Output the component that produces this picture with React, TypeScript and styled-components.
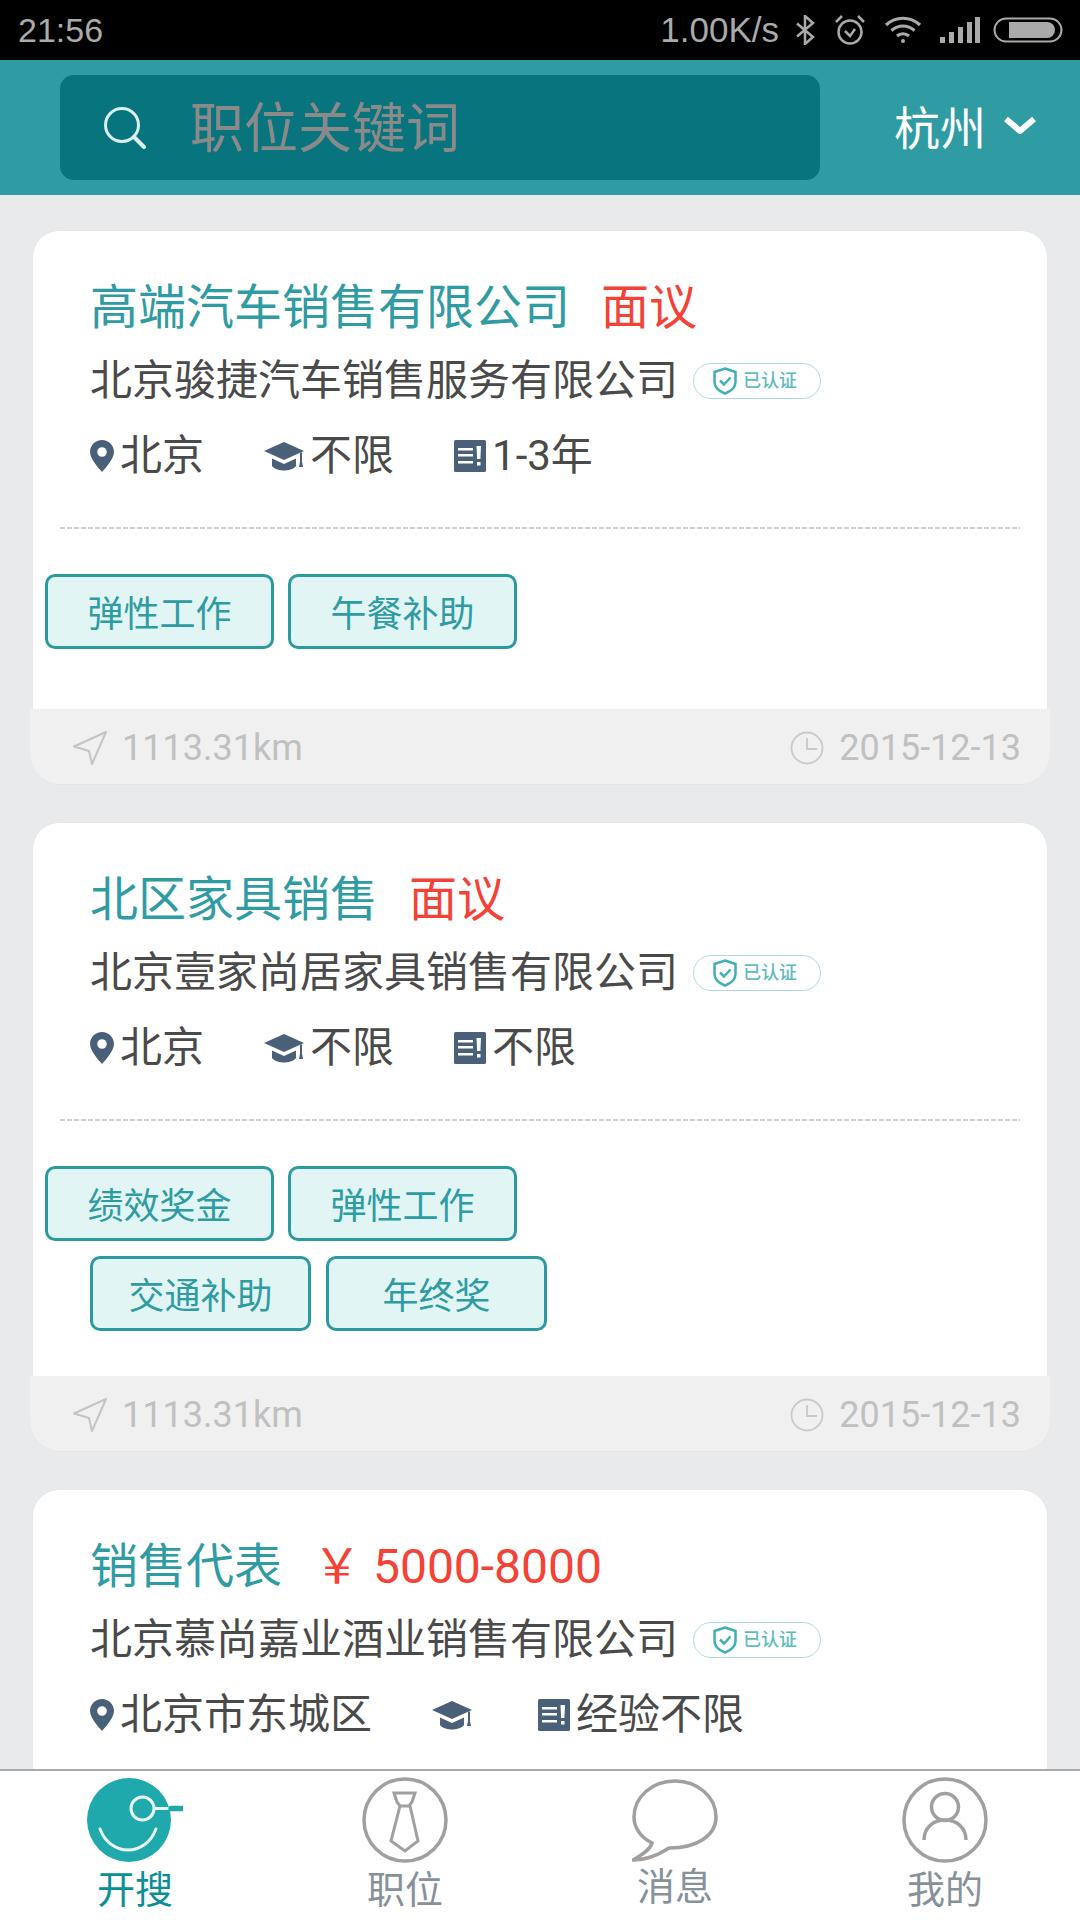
import styled, { createGlobalStyle } from 'styled-components';

const GlobalStyle = createGlobalStyle`
  html, body {
    margin: 0;
    padding: 0;
    background: #e9eaec;
    font-family: Roboto, "Noto Sans CJK SC", sans-serif;
  }
  * { box-sizing: border-box; }
`;

interface Job {
  title: string;
  salary: string;
  company: string;
  city: string;
  education: string;
  experience: string;
  tagRows: string[][];
}

const jobs: Job[] = [
  {
    title: '高端汽车销售有限公司',
    salary: '面议',
    company: '北京骏捷汽车销售服务有限公司',
    city: '北京',
    education: '不限',
    experience: '1-3年',
    tagRows: [['弹性工作', '午餐补助']],
  },
  {
    title: '北区家具销售',
    salary: '面议',
    company: '北京壹家尚居家具销售有限公司',
    city: '北京',
    education: '不限',
    experience: '不限',
    tagRows: [['绩效奖金', '弹性工作'], ['交通补助', '年终奖']],
  },
  {
    title: '销售代表',
    salary: '￥ 5000-8000',
    company: '北京慕尚嘉业酒业销售有限公司',
    city: '北京市东城区',
    education: '',
    experience: '经验不限',
    tagRows: [],
  },
];

const PinIcon = () => (
  <svg width="24" height="32" viewBox="0 0 24 32">
    <path
      fill="#4a6078"
      fillRule="evenodd"
      d="M12 0C5.4 0 0 5.2 0 11.8 0 19 8 27.5 12 32c4-4.5 12-13 12-20.2C24 5.2 18.6 0 12 0Zm0 7.2a4.8 4.8 0 1 1 0 9.6 4.8 4.8 0 0 1 0-9.6Z"
    />
  </svg>
);

const CapIcon = () => (
  <svg width="40" height="30" viewBox="0 0 40 30">
    <path fill="#4a6078" d="M20 1 40 10 20 19 0 10Z" />
    <path fill="#4a6078" d="M8 17.5 20 23l12-5.5V25c-3 3.5-8 4.500-12 4.500s-9-1-12-4.500Z" />
    <path fill="#4a6078" d="M36 11.500h2V21l1 5h-4l1-5Z" />
  </svg>
);

const NewsIcon = () => (
  <svg width="32" height="32" viewBox="0 0 32 32">
    <rect width="32" height="32" rx="1.500" fill="#4a6078" />
    <path fill="#fff" d="M4 8h15v2.500H4zM4 14h15v2.500H4zM4 21h15v2.500H4z" />
    <path fill="#fff" d="M22.500 6H27l-.6 13h-3.300zM23 22h3.500v3.500H23z" />
  </svg>
);

const SendIcon = () => (
  <svg width="34" height="34" viewBox="0 0 34 34" fill="none" stroke="#c4c4c4" strokeWidth="2" strokeLinejoin="round">
    <path d="M33 1 1 15.500l15 4.500 3 13Z" />
  </svg>
);

const ClockIcon = () => (
  <svg width="34" height="34" viewBox="0 0 34 34" fill="none" stroke="#c9c9c9" strokeWidth="1.800">
    <circle cx="17" cy="17" r="15.500" />
    <path d="M17 7v11h10" />
  </svg>
);

const ShieldIcon = () => (
  <svg width="24" height="28" viewBox="0 0 24 28" fill="none" stroke="#3fb0b5" strokeWidth="2.500">
    <path d="M12 1.500 22.500 5v10c0 6-5 9.500-10.500 11.500C6.500 24.500 1.500 21 1.500 15V5Z" />
    <path d="m7 13.500 4 4 6.500-7" />
  </svg>
);

const LogoIcon = () => (
  <svg width="96" height="86" viewBox="0 0 96 86" fill="none">
    <circle cx="42" cy="43" r="42" fill="#1fa9ad" />
    <circle cx="55.500" cy="31.500" r="11.500" stroke="#eafafa" strokeWidth="3" />
    <path d="M67 31.500h17" stroke="#eafafa" strokeWidth="3" />
    <path d="M84 31.500h11" stroke="#1fa9ad" strokeWidth="5.500" strokeLinecap="round" />
    <path d="M13 52c5 14 17 21 28 21s23-7 28-21" stroke="#eafafa" strokeWidth="3" strokeLinecap="round" />
  </svg>
);

const TieIcon = () => (
  <svg width="86" height="86" viewBox="0 0 86 86" fill="none" stroke="#a0a0a0" strokeWidth="3.500">
    <circle cx="43" cy="43" r="41" />
    <path d="M32 16h21l-3 9-3 4h-9l-3-4Z" strokeWidth="3" />
    <path d="M38 29 29 64l14 10 13-10-8-35" strokeWidth="3" />
  </svg>
);

const BubbleIcon = () => (
  <svg width="86" height="86" viewBox="0 0 86 86" fill="none" stroke="#a0a0a0" strokeWidth="3.500">
    <path d="M20 66C8 60 2 50 2 40 2 20 20 4 43 4s41 16 41 36c0 18-18 31-47 31-9 6-21 12-36 12 9-5 17-10 19-17Z" />
  </svg>
);

const PersonIcon = () => (
  <svg width="86" height="86" viewBox="0 0 86 86" fill="none" stroke="#a0a0a0" strokeWidth="3.500">
    <circle cx="43" cy="43" r="41" />
    <circle cx="43" cy="30" r="13.500" />
    <path d="M22 63c0-12 9-20 21-20s21 8 21 20" />
  </svg>
);

function Card({ job }: { job: Job }) {
  const hasFooter = job.tagRows.length > 0;
  return (
    <CardBox>
      <TitleRow>
        <Title>{job.title}</Title>
        <Salary>{job.salary}</Salary>
      </TitleRow>
      <CompanyRow>
        <span>{job.company}</span>
        <Verified>
          <ShieldIcon />
          <span>已认证</span>
        </Verified>
      </CompanyRow>
      <MetaRow>
        <MetaItem>
          <PinIcon />
          <span>{job.city}</span>
        </MetaItem>
        <MetaItem>
          <CapIcon />
          <span>{job.education}</span>
        </MetaItem>
        <MetaItem>
          <NewsIcon />
          <span>{job.experience}</span>
        </MetaItem>
      </MetaRow>
      {hasFooter && (
        <>
          <Dashed />
          <TagArea>
            {job.tagRows.map((row, i) => (
              <TagRow key={i} $second={i > 0}>
                {row.map(tag => (
                  <Tag key={tag} $second={i > 0}>{tag}</Tag>
                ))}
              </TagRow>
            ))}
          </TagArea>
          <CardFooter>
            <FooterItem>
              <SendIcon />
              <span>1113.31km</span>
            </FooterItem>
            <FooterItem>
              <ClockIcon />
              <span>2015-12-13</span>
            </FooterItem>
          </CardFooter>
        </>
      )}
    </CardBox>
  );
}

export default function App() {
  return (
    <Page>
      <GlobalStyle />
      <StatusBar>
        <span>21:56</span>
        <StatusRight>
          <Speed>1.00K/s</Speed>
          <svg width="21" height="30" viewBox="0 0 21 30" fill="none" stroke="#aaa" strokeWidth="2.500">
            <path d="M2 8.500 18 22l-8 7V1l8 7L2 21.500" />
          </svg>
          <svg width="32" height="32" viewBox="0 0 32 32" fill="none" stroke="#aaa" strokeWidth="2.500">
            <circle cx="16" cy="18" r="11.500" />
            <path d="m11 17 5 5 5-7M2 8l6-6M30 8l-6-6" />
          </svg>
          <svg width="38" height="28" viewBox="0 0 38 28" fill="none" stroke="#aaa" strokeWidth="3.200">
            <path d="M2 9c10-9 24-9 34 0M7.500 14.500c7-6 16-6 23 0M13 20c3.500-3 8.500-3 12 0" />
            <circle cx="19" cy="25" r="2" fill="#aaa" stroke="none" />
          </svg>
          <svg width="40" height="26" viewBox="0 0 40 26" fill="#aaa">
            <path d="M0 20h5v6H0zM9 15h5v11H9zM18 10h5v16h-5zM27 5h5v21h-5zM35 0h5v26h-5z" />
          </svg>
          <Battery width="70" height="26" viewBox="0 0 70 26" fill="none">
            <rect x="1.500" y="1.500" width="67" height="23" rx="11.500" stroke="#aaa" strokeWidth="2" />
            <path fill="#aaa" d="M16 5h38a8 8 0 0 1 0 16H16z" />
          </Battery>
        </StatusRight>
      </StatusBar>

      <Header>
        <SearchBox>
          <svg width="44" height="42" viewBox="0 0 44 42" fill="none" stroke="#d8f0ee" strokeWidth="3">
            <circle cx="19" cy="18" r="16.500" />
            <path d="m31 30 10 10" strokeWidth="4" strokeLinecap="round" />
          </svg>
          <Placeholder>职位关键词</Placeholder>
        </SearchBox>
        <CityPicker>
          <span>杭州</span>
          <svg width="32" height="18" viewBox="0 0 32 18" fill="none" stroke="#fff" strokeWidth="6">
            <path d="m2 3 14 12L30 3" />
          </svg>
        </CityPicker>
      </Header>

      <List>
        {jobs.map(job => (
          <Card key={job.title} job={job} />
        ))}
      </List>

      <TabBar>
        <Tab>
          <LogoIcon />
          <TabLabel $active>开搜</TabLabel>
        </Tab>
        <Tab>
          <TieIcon />
          <TabLabel>职位</TabLabel>
        </Tab>
        <Tab>
          <BubbleIcon />
          <TabLabel $raised>消息</TabLabel>
        </Tab>
        <Tab>
          <PersonIcon />
          <TabLabel>我的</TabLabel>
        </Tab>
      </TabBar>
    </Page>
  );
}

const Page = styled.div`
  width: 1080px;
  height: 1920px;
  display: flex;
  flex-direction: column;
  overflow: hidden;
  background: #e9eaec;
`;

const StatusBar = styled.div`
  height: 60px;
  flex: none;
  background: #000;
  color: #aaa;
  font-family: "Liberation Sans", sans-serif;
  font-size: 34px;
  padding: 0 17px 0 18px;
  display: flex;
  align-items: center;
  justify-content: space-between;
`;

const StatusRight = styled.div`
  display: flex;
  align-items: center;
  gap: 18px;
`;

const Speed = styled.span`
  font-size: 35px;
  margin-right: -2px;
`;

const Battery = styled.svg`
  margin-left: -5px;
`;

const Header = styled.div`
  height: 135px;
  flex: none;
  background: #2f9ba3;
  padding: 15px 44px 15px 60px;
  display: flex;
  justify-content: space-between;
`;

const SearchBox = styled.div`
  width: 760px;
  height: 105px;
  background: #08747e;
  border-radius: 14px;
  padding: 0 0 0 43px;
  display: flex;
  align-items: center;
  gap: 43px;
`;

const Placeholder = styled.span`
  font-size: 54px;
  color: #8a8a8a;
  line-height: 1;
  padding-top: 5px;
`;

const CityPicker = styled.div`
  display: flex;
  align-items: center;
  gap: 18px;
  color: #fff;
  font-size: 46px;
  padding-bottom: 6px;
`;

const List = styled.div`
  flex: 1;
  min-height: 0;
  overflow: hidden;
  padding: 36px 33px 0;
  display: flex;
  flex-direction: column;
  gap: 39px;
`;

const CardBox = styled.div`
  flex: none;
  background: #fff;
  border-radius: 26px 26px 30px 30px;
  padding-top: 53px;
  box-shadow: 0 0 2px rgba(0, 0, 0, 0.04);

  &:last-child {
    flex: 1 0 auto;
    border-radius: 26px 26px 0 0;
  }
`;

const TitleRow = styled.div`
  display: flex;
  align-items: center;
  gap: 31px;
  padding-left: 57px;
  font-size: 48px;
  line-height: 48px;
`;

const Title = styled.span`
  color: #2f9ba3;
`;

const Salary = styled.span`
  color: #f44336;
`;

const CompanyRow = styled.div`
  margin-top: 24px;
  padding-left: 57px;
  display: flex;
  align-items: center;
  gap: 15px;
  font-size: 42px;
  line-height: 50px;
  color: #4a4a4a;
`;

const Verified = styled.span`
  width: 128px;
  height: 36px;
  border: 1.5px solid #aedbe0;
  border-radius: 18px;
  padding-left: 19px;
  display: flex;
  align-items: center;
  gap: 6px;
  font-size: 18px;
  font-weight: 500;
  line-height: 1;
  color: #5dbcc0;
`;

const MetaRow = styled.div`
  margin-top: 25px;
  padding-left: 57px;
  display: flex;
  align-items: center;
  gap: 60px;
  font-size: 42px;
  line-height: 50px;
  color: #4a4a4a;
`;

const MetaItem = styled.div`
  display: flex;
  align-items: center;
  gap: 6px;
`;

const Dashed = styled.div`
  height: 2px;
  margin: 46px 27px 0;
  background: repeating-linear-gradient(to right, #cfcfcf 0 5px, transparent 5px 7px);
`;

const TagArea = styled.div`
  margin-top: 45px;
  min-height: 135px;
  padding-bottom: 45px;
  display: flex;
  flex-direction: column;
  gap: 15px;
`;

const TagRow = styled.div<{ $second?: boolean }>`
  display: flex;
  gap: ${p => (p.$second ? 15 : 14)}px;
  padding-left: ${p => (p.$second ? 57 : 12)}px;
`;

const Tag = styled.div<{ $second?: boolean }>`
  width: ${p => (p.$second ? 221 : 229)}px;
  height: 75px;
  padding-bottom: 2px;
  background: #e1f5f4;
  border: 3px solid #2a9aa0;
  border-radius: 10px;
  display: flex;
  align-items: center;
  justify-content: center;
  font-size: 36px;
  color: #2f9ba3;
`;

const CardFooter = styled.div`
  height: 75px;
  margin: 0 -3px;
  padding: 2px 29px 0 43px;
  background: #f0f0f1;
  border-radius: 0 0 30px 30px;
  display: flex;
  align-items: center;
  justify-content: space-between;
  font-size: 36px;
  color: #c0c0c0;
  box-shadow: 0 1px 1px rgba(0, 0, 0, 0.02);
`;

const FooterItem = styled.div`
  display: flex;
  align-items: center;
  gap: 15px;
`;

const TabBar = styled.div`
  height: 151px;
  flex: none;
  background: #fff;
  border-top: 2px solid #aaa;
  display: grid;
  grid-template-columns: repeat(4, 270px);
`;

const Tab = styled.div`
  padding-top: 6px;
  display: flex;
  flex-direction: column;
  align-items: center;
`;

const TabLabel = styled.span<{ $active?: boolean; $raised?: boolean }>`
  margin-top: ${p => (p.$raised ? 4 : 7)}px;
  font-size: 38px;
  line-height: 40px;
  color: ${p => (p.$active ? '#0a8f96' : '#87919a')};
`;
